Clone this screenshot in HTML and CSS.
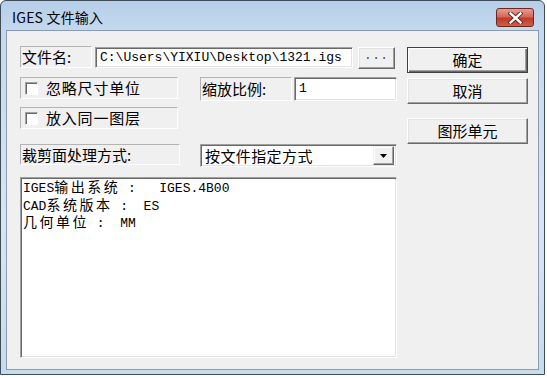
FILE: index.html
```html
<!DOCTYPE html>
<html lang="zh-CN">
<head>
<meta charset="utf-8"/>
<title>IGES 文件输入</title>
<link rel="stylesheet" href="styles.css">
</head>
<body>
<div class="window">
  <div class="titlebar">
    <span class="title">IGES 文件输入</span>
    <span class="close">
      <svg width="15" height="12" viewBox="0 0 15 12">
        <path d="M2.5 1.5 L12.5 10.5 M12.5 1.5 L2.5 10.5" stroke="#5a1e18" stroke-width="4.2" stroke-linecap="square"/>
        <path d="M2.5 1.5 L12.5 10.5 M12.5 1.5 L2.5 10.5" stroke="#fff" stroke-width="2.4" stroke-linecap="square"/>
      </svg>
    </span>
  </div>
  <div class="client">
    <div class="main">
      <div class="row row-file">
        <div class="static w-file">文件名:</div>
        <div class="edit mono w-path">C:\Users\YIXIU\Desktop\1321.igs</div>
        <div class="btn browse">...</div>
      </div>
      <div class="row row-opts">
        <div class="static check w-check"><span class="box"></span>忽略尺寸单位</div>
        <div class="static w-scale">缩放比例:</div>
        <div class="edit mono w-scale-val">1</div>
      </div>
      <div class="row row-layer">
        <div class="static check w-check"><span class="box"></span>放入同一图层</div>
      </div>
      <div class="row row-clip">
        <div class="static w-clip">裁剪面处理方式:</div>
        <div class="edit combo">
          <span class="combo-text">按文件指定方式</span>
          <span class="drop"><svg width="7" height="4" viewBox="0 0 7 4"><path d="M0 0 H7 L3.5 4 Z" fill="#000"/></svg></span>
        </div>
      </div>
      <div class="edit info">
<pre>IGES<span class="cj">输出系统</span> :   IGES.4B00
CAD<span class="cj">系统版本</span> :  ES
<span class="cj">几何单位</span> :  MM</pre>
      </div>
    </div>
    <div class="side">
      <div class="btn default">确定</div>
      <div class="btn cancel">取消</div>
      <div class="btn units">图形单元</div>
    </div>
  </div>
</div>
</body>
</html>
```

FILE: styles.css
```css
body {
    margin: 0;
    background: #fff;
    font-family: "Noto Sans CJK SC", sans-serif;
    color: #000;
}
.window {
    width: 545px;
    height: 375px;
    box-sizing: border-box;
    border: 1px solid #3f4d5a;
    border-radius: 6px 6px 0 0;
    background: linear-gradient(#b6cee8, #c4d9ef 30px, #d6e5f5 220px, #c6dcec);
    padding: 0 5px 4px 5px;
    display: flex;
    flex-direction: column;
}
.titlebar {
    height: 29px;
    display: flex;
    justify-content: space-between;
    padding-left: 6px;
}
.title {
    font-size: 14px;
    line-height: 32px;
    letter-spacing: 0.2px;
}
.close {
    width: 38px;
    height: 19px;
    box-sizing: border-box;
    margin: 7px 5px 0 0;
    border: 1px solid #6a2820;
    border-radius: 3px;
    background: linear-gradient(#e59d90, #d4695a 45%, #c23a28 55%, #cf5f45);
    display: flex;
    align-items: center;
    justify-content: center;
}
.client {
    flex: 1;
    display: flex;
    border: 1px solid #8a9bb0;
    background: #f0f0f0;
    padding: 15px 0 0 13px;
}
.main {
    width: 377px;
}
.row {
    display: flex;
    align-items: flex-start;
}
.static {
    box-sizing: border-box;
    height: 22px;
    line-height: 20px;
    font-size: 15px;
    border: 1px solid;
    border-color: #b4b4b4 #fff #fff #b4b4b4;
    padding-left: 1px;
    white-space: nowrap;
}
.edit {
    box-sizing: border-box;
    background: #fff;
    border: 1px solid;
    border-color: #a0a0a0 #fff #fff #a0a0a0;
    box-shadow: inset 1px 1px #696969, inset -1px -1px #e3e3e3;
}
.mono {
    font-family: "Liberation Mono", monospace;
    font-size: 13px;
    padding-left: 4px;
    white-space: nowrap;
}
.btn {
    box-sizing: border-box;
    background: #f0f0f0;
    border: 1px solid;
    border-color: #fff #696969 #696969 #fff;
    box-shadow: inset -1px -1px #a0a0a0, inset 1px 1px #e3e3e3;
    text-align: center;
    font-size: 15px;
}
.row-file {
    gap: 3px;
}
.w-file {
    width: 72px;
}
.w-path {
    width: 258px;
    height: 21px;
    margin-top: 1px;
    line-height: 19px;
}
.browse {
    width: 37px;
    height: 22px;
    margin-left: 2px;
    margin-top: 1px;
    font-family: "Liberation Mono", monospace;
    font-size: 12px;
    line-height: 16px;
    letter-spacing: 1px;
    color: #444;
}
.row-opts {
    margin-top: 8px;
}
.w-check {
    width: 158px;
    display: flex;
    align-items: center;
    padding-left: 4px;
    letter-spacing: 0.8px;
}
.box {
    width: 13px;
    height: 13px;
    box-sizing: border-box;
    margin-right: 8px;
    background: #fff;
    border: 1px solid;
    border-color: #a0a0a0 #fff #fff #a0a0a0;
    box-shadow: inset 1px 1px #696969;
}
.w-scale {
    width: 92px;
    height: 24px;
    line-height: 22px;
    margin-left: 22px;
}
.w-scale-val {
    width: 103px;
    height: 24px;
    margin-left: 2px;
    line-height: 22px;
}
.row-layer {
    margin-top: 6px;
}
.row-clip {
    margin-top: 15px;
}
.w-clip {
    width: 160px;
    height: 21px;
    line-height: 19px;
}
.combo {
    width: 197px;
    height: 23px;
    margin-left: 20px;
    display: flex;
    align-items: center;
    justify-content: space-between;
    padding: 0 2px 0 4px;
}
.combo-text {
    font-size: 15px;
    letter-spacing: 0.4px;
}
.drop {
    width: 21px;
    height: 19px;
    box-sizing: border-box;
    border: 1px solid;
    border-color: #f0f0f0 #696969 #696969 #f0f0f0;
    box-shadow: inset -1px -1px #a0a0a0, inset 1px 1px #fff;
    background: #f0f0f0;
    display: flex;
    align-items: center;
    justify-content: center;
}
.info {
    margin-top: 10px;
    height: 181px;
    padding: 1px 2px;
}
.info pre {
    margin: 0;
    font-family: "Liberation Mono", "Noto Sans CJK SC", monospace;
    font-size: 13px;
    line-height: 14.5px;
}
.cj {
    font-family: "Noto Sans CJK SC", sans-serif;
    font-size: 14px;
    line-height: 14px;
    letter-spacing: 2.5px;
}
.side {
    width: 121px;
    margin-left: 10px;
    padding-top: 1px;
}
.side .btn {
    height: 26px;
    line-height: 23px;
}
.default {
    border-color: #404040;
    box-shadow: inset 1px 1px #fff, inset -1px -1px #696969, inset -2px -2px #a0a0a0;
}
.cancel {
    margin-top: 5px;
}
.units {
    margin-top: 14px;
}
```
